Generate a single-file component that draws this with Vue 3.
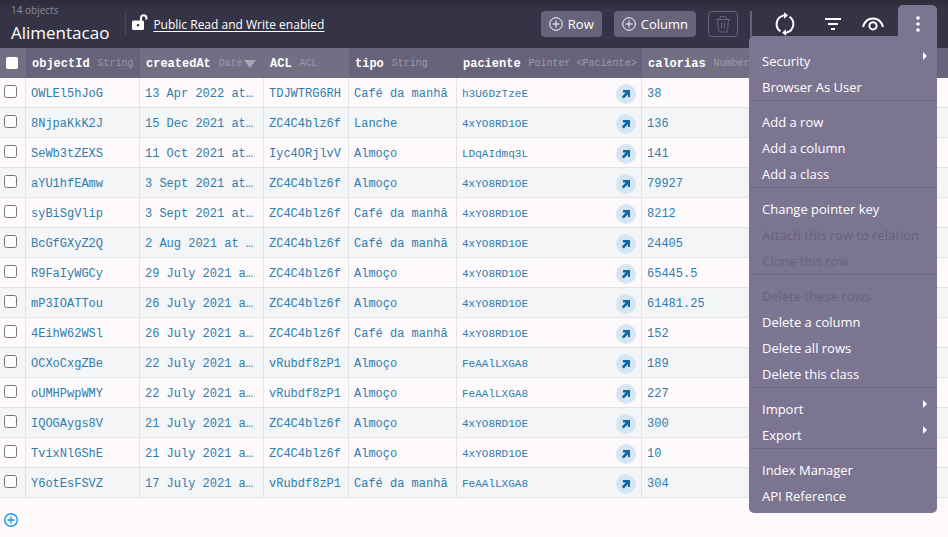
<script setup>
import { ref } from 'vue'

const columns = [
  { name: 'objectId', type: 'String', key: 'id', tone: 'dark' },
  { name: 'createdAt', type: 'Date', key: 'created', tone: 'light', sorted: true },
  { name: 'ACL', type: 'ACL', key: 'acl', tone: 'light' },
  { name: 'tipo', type: 'String', key: 'tipo', tone: 'dark' },
  { name: 'paciente', type: 'Pointer <Paciente>', key: 'paciente', tone: 'dark', pointer: true },
  { name: 'calorias', type: 'Number', key: 'calorias', tone: 'light' },
]

const rows = ref([
  ['OWLEl5hJoG', '13 Apr 2022 at…', 'TDJWTRG6RH', 'Café da manhã', 'h3U6DzTzeE', '38'],
  ['8NjpaKkK2J', '15 Dec 2021 at…', 'ZC4C4blz6f', 'Lanche', '4xYO8RD1OE', '136'],
  ['SeWb3tZEXS', '11 Oct 2021 at…', 'Iyc4ORjlvV', 'Almoço', 'LDqAIdmq3L', '141'],
  ['aYU1hfEAmw', '3 Sept 2021 at…', 'ZC4C4blz6f', 'Almoço', '4xYO8RD1OE', '79927'],
  ['syBiSgVlip', '3 Sept 2021 at…', 'ZC4C4blz6f', 'Café da manhã', '4xYO8RD1OE', '8212'],
  ['BcGfGXyZ2Q', '2 Aug 2021 at …', 'ZC4C4blz6f', 'Café da manhã', '4xYO8RD1OE', '24405'],
  ['R9FaIyWGCy', '29 July 2021 a…', 'ZC4C4blz6f', 'Almoço', '4xYO8RD1OE', '65445.5'],
  ['mP3IOATTou', '26 July 2021 a…', 'ZC4C4blz6f', 'Almoço', '4xYO8RD1OE', '61481.25'],
  ['4EihW62WSl', '26 July 2021 a…', 'ZC4C4blz6f', 'Café da manhã', '4xYO8RD1OE', '152'],
  ['OCXoCxgZBe', '22 July 2021 a…', 'vRubdf8zP1', 'Almoço', 'FeAAlLXGA8', '189'],
  ['oUMHPwpWMY', '22 July 2021 a…', 'vRubdf8zP1', 'Almoço', 'FeAAlLXGA8', '227'],
  ['IQOGAygs8V', '21 July 2021 a…', 'ZC4C4blz6f', 'Almoço', '4xYO8RD1OE', '300'],
  ['TvixNlGShE', '21 July 2021 a…', 'ZC4C4blz6f', 'Almoço', '4xYO8RD1OE', '10'],
  ['Y6otEsFSVZ', '17 July 2021 a…', 'vRubdf8zP1', 'Café da manhã', 'FeAAlLXGA8', '304'],
].map(([id, created, acl, tipo, paciente, calorias]) => ({ id, created, acl, tipo, paciente, calorias, selected: false })))

const menu = [
  [{ text: 'Security', sub: true }, { text: 'Browser As User' }],
  [{ text: 'Add a row' }, { text: 'Add a column' }, { text: 'Add a class' }],
  [{ text: 'Change pointer key' }, { text: 'Attach this row to relation', disabled: true }, { text: 'Clone this row', disabled: true }],
  [{ text: 'Delete these rows', disabled: true }, { text: 'Delete a column' }, { text: 'Delete all rows' }, { text: 'Delete this class' }],
  [{ text: 'Import', sub: true }, { text: 'Export', sub: true }],
  [{ text: 'Index Manager' }, { text: 'API Reference' }],
]

const menuOpen = ref(true)
const toggleAll = (event) => rows.value.forEach((row) => { row.selected = event.target.checked })
</script>

<template>
  <div class="browser">
    <header class="toolbar">
      <div class="title">
        <span class="count">14 objects</span>
        <h1>Alimentacao</h1>
      </div>
      <div class="permissions">
        <svg width="16" height="17" viewBox="0 0 16 17" aria-hidden="true">
          <path fill="#fff" fill-rule="evenodd" d="M1.500 6.500h9A1.500 1.500 0 0 1 12 8v6.500a1.500 1.500 0 0 1-1.500 1.500h-9A1.500 1.500 0 0 1 0 14.500V8a1.500 1.500 0 0 1 1.500-1.500zM6 10a1.300 1.300 0 1 0 0 2.600a1.300 1.300 0 1 0 0-2.600z" />
          <path class="shackle" d="M9 7V4a2.700 2.700 0 0 1 5.400 0v1.500" />
        </svg>
        <a href="#permissions">Public Read and Write enabled</a>
      </div>
      <div class="actions">
        <button class="pill">
          <svg width="14" height="14" viewBox="0 0 14 14" aria-hidden="true"><circle cx="7" cy="7" r="6.300" /><path d="M7 3.500v7M3.500 7h7" /></svg>
          Row
        </button>
        <button class="pill">
          <svg width="14" height="14" viewBox="0 0 14 14" aria-hidden="true"><circle cx="7" cy="7" r="6.300" /><path d="M7 3.500v7M3.500 7h7" /></svg>
          Column
        </button>
        <button class="trash" aria-label="Delete" disabled>
          <svg width="16" height="18" viewBox="0 0 16 18" aria-hidden="true"><path d="M.5 4.500h15M5 4V2.500A1 1 0 0 1 6 1.500h4a1 1 0 0 1 1 1V4M2.500 4.500l1 11a1.500 1.500 0 0 0 1.500 1.500h6a1.500 1.500 0 0 0 1.500-1.500l1-11M6.500 7.500v6M9.500 7.500v6" /></svg>
        </button>
      </div>
      <div class="tools">
        <button aria-label="Refresh">
          <svg width="20" height="24" viewBox="0 0 20 24" aria-hidden="true">
            <path d="M5.500 19.300A8.800 8.800 0 0 1 8 3.600L11 3.200M14.500 4.700A8.800 8.800 0 0 1 12 20.400L9 20.800" />
            <path class="solid" d="M9 .3l4 3-4 3.500zM11 17.200l-4 3.500 4 3z" />
          </svg>
        </button>
        <button aria-label="Filter">
          <svg width="18" height="12" viewBox="0 0 18 12" aria-hidden="true"><path d="M1 1h16M4 6h10M7 11h4" /></svg>
        </button>
        <button aria-label="Visibility">
          <svg width="22" height="14" viewBox="0 0 22 14" aria-hidden="true"><path d="M1 10C2.500 4.500 6.500 1.500 11 1.500S19.500 4.500 21 10" /><circle cx="11" cy="8.800" r="3.600" /></svg>
        </button>
        <button class="more" aria-label="More" :aria-expanded="menuOpen" @click="menuOpen = !menuOpen">
          <svg width="4" height="16" viewBox="0 0 4 16" aria-hidden="true"><g class="solid"><circle cx="2" cy="2" r="1.800" /><circle cx="2" cy="8" r="1.800" /><circle cx="2" cy="14" r="1.800" /></g></svg>
        </button>
        <nav v-if="menuOpen" class="menu" aria-label="Edit">
          <div v-for="(group, g) in menu" :key="g" class="group">
            <button v-for="item in group" :key="item.text" :disabled="item.disabled">
              {{ item.text }}
              <span v-if="item.sub" class="arrow"></span>
            </button>
          </div>
        </nav>
      </div>
    </header>

    <main>
      <table>
        <colgroup>
          <col class="c-check" /><col class="c-id" /><col class="c-created" /><col class="c-acl" />
          <col class="c-tipo" /><col class="c-paciente" /><col class="c-calorias" /><col />
        </colgroup>
        <thead>
          <tr>
            <th class="check light"><input type="checkbox" class="all" aria-label="Select all rows" @change="toggleAll" /></th>
            <th v-for="col in columns" :key="col.key" :class="col.tone">
              <div class="heading">
                <span class="name">{{ col.name }}</span>
                <span class="type">{{ col.type }}</span>
                <span v-if="col.sorted" class="sort"></span>
              </div>
            </th>
            <th class="dark"></th>
          </tr>
        </thead>
        <tbody>
          <tr v-for="row in rows" :key="row.id">
            <td class="check"><input v-model="row.selected" type="checkbox" :aria-label="'Select ' + row.id" /></td>
            <td v-for="col in columns" :key="col.key">
              <div v-if="col.pointer" class="pointer">
                <span>{{ row[col.key] }}</span>
                <a href="#pointer" :aria-label="'Open ' + row[col.key]">
                  <svg width="10" height="10" viewBox="0 0 10 10" aria-hidden="true"><path fill="#0e69a1" d="M2 1H9v7H7V5.300L2.700 9.500.8 7.700 4.800 3.500H2z" /></svg>
                </a>
              </div>
              <template v-else>{{ row[col.key] }}</template>
            </td>
            <td></td>
          </tr>
        </tbody>
      </table>
      <button class="add" aria-label="Add a row">
        <svg width="14" height="14" viewBox="0 0 14 14" aria-hidden="true"><circle cx="7" cy="7" r="6.300" /><path d="M7 3.500v7M3.500 7h7" /></svg>
      </button>
    </main>
  </div>
</template>

<style>
body {
  margin: 0;
  background: #fefafb;
}
</style>

<style scoped>
.browser {
  min-height: 100vh;
  overflow: hidden;
  font-family: "Open Sans", "Noto Sans", sans-serif;
}
button {
  margin: 0;
  padding: 0;
  border: 0;
  background: none;
  color: inherit;
  font: inherit;
}
svg {
  display: block;
  flex: none;
  fill: none;
  stroke: currentColor;
}
.solid {
  fill: currentColor;
  stroke: none;
}
.toolbar {
  display: flex;
  height: 48px;
  background: linear-gradient(#2d2c3b, #353446 10px);
  color: #fff;
}
.title {
  display: flex;
  flex-direction: column;
  padding: 3px 16px 0 11px;
}
.count {
  font-size: 10px;
  line-height: 14px;
  color: #8a8995;
}
h1 {
  margin: 0;
  font-size: 17px;
  font-weight: 400;
  line-height: 32px;
}
.permissions {
  display: flex;
  align-items: center;
  align-self: flex-start;
  gap: 5px;
  height: 22px;
  margin-top: 13px;
  padding-left: 6px;
  border-left: 1px solid #4c4b5d;
  font-size: 12px;
  white-space: nowrap;
}
.permissions svg {
  stroke: none;
  margin-bottom: 3px;
}
.permissions .shackle {
  stroke: #fff;
  stroke-width: 2;
}
.permissions a {
  color: #fff;
  text-underline-offset: 2px;
}
.actions {
  display: flex;
  flex: 1;
  justify-content: flex-end;
  gap: 12px;
  padding: 11px 12px 11px 0;
}
.pill {
  display: flex;
  align-items: center;
  gap: 5px;
  padding: 0 8px;
  border-radius: 4px;
  background: #66637a;
  font-size: 13px;
}
.trash {
  display: grid;
  place-items: center;
  width: 30px;
  border: 1px solid #66637a;
  border-radius: 4px;
  color: #66637a;
}
.tools {
  position: relative;
  display: flex;
  align-items: center;
  padding-right: 11px;
}
.tools::before {
  content: "";
  width: 2px;
  height: 26px;
  margin-right: 23px;
  background: #66637a;
}
.tools > button {
  margin-right: 20px;
}
.tools > button:first-of-type {
  margin-right: 29px;
}
.tools svg {
  stroke-width: 2;
}
.tools > .more {
  display: grid;
  place-items: center;
  align-self: flex-end;
  width: 39px;
  height: 43px;
  margin: 0 0 0 -6px;
  padding-bottom: 5px;
  box-sizing: border-box;
  border-radius: 5px 5px 0 0;
  background: #7c7592;
}
.menu {
  position: absolute;
  z-index: 2;
  top: 36px;
  right: 11px;
  width: 188px;
  padding: 4px 0;
  border-radius: 5px 0 5px 5px;
  background: #7c7592;
  font-size: 13px;
}
.group {
  padding-top: 8px;
  border-bottom: 1px solid #6c6783;
}
.group:last-child {
  border-bottom: 0;
}
.group button {
  display: flex;
  justify-content: space-between;
  width: 100%;
  padding: 0 10px 0 13px;
  line-height: 26px;
  white-space: nowrap;
}
.group button:disabled {
  color: #66617b;
}
.arrow {
  margin-top: 4px;
  height: 0;
  border: 4px solid transparent;
  border-left-color: #fff;
  border-right-width: 0;
}
table {
  width: 100%;
  table-layout: fixed;
  border-collapse: separate;
  border-spacing: 0;
  font-family: "Liberation Mono", monospace;
  font-size: 12px;
  line-height: 16px;
}
.c-check { width: 26px; }
.c-id { width: 114px; }
.c-created { width: 124px; }
.c-acl { width: 85px; }
.c-tipo { width: 108px; }
.c-paciente { width: 185px; }
.c-calorias { width: 150px; }
th,
td {
  box-sizing: border-box;
  height: 30px;
  padding: 2px 5px 0;
  overflow: hidden;
  text-align: left;
  white-space: nowrap;
}
th {
  padding: 2px 0 0 6px;
  color: #fff;
}
.light { background: #726f85; }
.dark { background: #66637a; }
.heading {
  display: flex;
  align-items: center;
}
.name {
  font-weight: 700;
}
.type {
  margin-left: 8px;
  color: #9c9aab;
  font-size: 10px;
  font-weight: 400;
}
.sort {
  margin-left: 1px;
  border: 6px solid transparent;
  border-top: 8px solid #a9a8b6;
  border-bottom: 0;
}
td {
  border-right: 1px solid #e1e3e8;
  border-bottom: 1px solid #e1e3e8;
  color: #2f7dae;
}
td:last-child {
  border-right: 0;
}
tbody tr:nth-child(even) {
  background: #f4f5f7;
}
.check {
  padding: 0 0 0 4px;
}
.check input {
  display: block;
  width: 13px;
  height: 13px;
  margin: 0 0 2px;
}
.check .all:not(:checked) {
  appearance: none;
  width: 12px;
  height: 12px;
  margin: 0 0 0 2px;
  border-radius: 2px;
  background: #fff;
}
.pointer {
  display: flex;
  align-items: center;
  justify-content: space-between;
  font-size: 11px;
}
.pointer a {
  display: grid;
  place-items: center;
  width: 20px;
  height: 20px;
  border-radius: 50%;
  background: #d5e5f2;
}
.pointer svg {
  stroke: none;
}
.add {
  display: block;
  margin: 15px 0 0 4px;
  color: #169cee;
}
.add svg {
  stroke-width: 1.400;
}
</style>
